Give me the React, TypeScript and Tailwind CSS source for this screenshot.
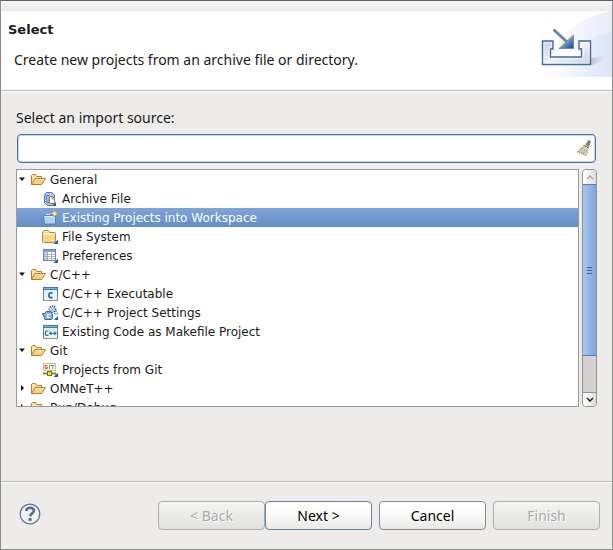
import React, { useState } from 'react';
import { clsx } from 'clsx';

// ===============================================
// TYPES
// ===============================================

type IconName =
  | 'folder'
  | 'archive'
  | 'project'
  | 'fileSystem'
  | 'preferences'
  | 'cExecutable'
  | 'cSettings'
  | 'makefile'
  | 'git';

interface SourceItem {
  label: string;
  icon: IconName;
}

interface SourceGroup {
  label: string;
  open: boolean;
  items: SourceItem[];
}

// ===============================================
// DATA
// ===============================================

const initialGroups: SourceGroup[] = [
  {
    label: 'General',
    open: true,
    items: [
      { label: 'Archive File', icon: 'archive' },
      { label: 'Existing Projects into Workspace', icon: 'project' },
      { label: 'File System', icon: 'fileSystem' },
      { label: 'Preferences', icon: 'preferences' },
    ],
  },
  {
    label: 'C/C++',
    open: true,
    items: [
      { label: 'C/C++ Executable', icon: 'cExecutable' },
      { label: 'C/C++ Project Settings', icon: 'cSettings' },
      { label: 'Existing Code as Makefile Project', icon: 'makefile' },
    ],
  },
  {
    label: 'Git',
    open: true,
    items: [{ label: 'Projects from Git', icon: 'git' }],
  },
  { label: 'OMNeT++', open: false, items: [] },
  { label: 'Run/Debug', open: false, items: [] },
];

// ===============================================
// TREE ICONS
// ===============================================

// Small blue corner that marks an import wizard
const corner = <path d="M16 10.5v4.5h-4.500z" fill="#1d62a8" />;

const codeWindow = (
  <>
    <rect x="1.5" y="1.5" width="14" height="13" fill="#e4f4fb" stroke="#5f88a8" />
    <path d="M1 1h15v3H1z" fill="#3f78b5" />
    <path d="M2 2h13v1H2z" fill="#8ab4de" />
    <path d="M1 14.5h15" stroke="#a59467" />
  </>
);

const iconShapes: Record<IconName, React.ReactNode> = {
  folder: (
    <>
      <path d="M1.5 12.5v-9l1-1h3l1 2h5v3" fill="#fbe3a6" stroke="#b87a34" />
      <path d="M1.5 12.5 5 6.5h10.5l-4 6z" fill="#f9d27c" stroke="#b87a34" strokeLinejoin="round" />
      <path d="M5.6 7.5h8" stroke="#ffefc0" />
    </>
  ),
  archive: (
    <>
      <path d="M4.5 1.5h5l3 2.5v8l-2 2h-1v.5h-4V14L2.500 12V4z" fill="#b4cbea" stroke="#4a74b0" />
      <path d="M2.500 4.500h2M2.500 6.500h2M2.500 8.500h2M2.500 10.500h2" stroke="#7f9dca" />
      <path d="M5 4.5h2v7H5z" fill="#f2f6fc" stroke="#4a74b0" />
      <path d="M7.5 5.5h3l2 2v5h-5z" fill="#fffbea" stroke="#8a8468" />
      <path d="M10 5.5v2.5h2.5" fill="none" stroke="#9c8a5e" />
      <path d="M14 11v4h-4z" fill="#1d62a8" />
    </>
  ),
  project: (
    <>
      <path d="M3.5 6V3.500h5V6z" fill="#dbe8f7" stroke="#7d9fce" />
      <path d="M1.5 5.5h12v8.500H2.5z" fill="#b5d1ef" stroke="#5a80ba" />
      <path d="M2.500 6.5h10" stroke="#dcebfb" />
      <path d="m12.5 0 1.200 2.300L16 3.5l-2.300 1.200L12.5 7l-1.200-2.300L9 3.5l2.300-1.200z" fill="#ffe98a" stroke="#b98e28" strokeWidth=".7" />
      <path d="M12.5 1.5v4M10.5 3.5h4" stroke="#fffbe0" />
    </>
  ),
  fileSystem: (
    <>
      <path d="M.5 12.5v-9l1.500-2h4l1.500 2h5.500l.5 1v8l-1 1H1.500z" fill="#f9d681" stroke="#bb8538" />
      <path d="M1.5 4.5h11M1.5 5.5h11" stroke="#fff1c3" />
      <path d="M2 2.5h4" stroke="#fff3cf" />
      {corner}
    </>
  ),
  preferences: (
    <>
      <rect x="1.5" y="1.5" width="12" height="11" fill="#fff" stroke="#6e83a4" />
      <path d="M2 2h11v2H2z" fill="#8aa3c8" />
      <path d="M2 4h3v8H2z" fill="#c1d1e8" />
      <path d="M2 6.5h11M2 8.5h11M2 10.5h11" stroke="#a9b7cf" />
      <path d="M5.5 2v10M9.5 2v10" stroke="#8fa1bf" strokeWidth=".8" />
      {corner}
    </>
  ),
  cExecutable: (
    <>
      {codeWindow}
      <path d="M10.5 6.8H8.200L7 8v2.500l1.200 1.200h2.300" fill="none" stroke="#286899" strokeWidth="1.8" />
    </>
  ),
  cSettings: (
    <>
      <path d="M.5 8.5H3l1-2h5v1.500l1.500 1v4l-1 1.500H3L2 12z" fill="#86b0e4" stroke="#3566a5" />
      <path d="M8.5 9.5H5.700v3h2.800" fill="none" stroke="#fff" strokeWidth="1.2" />
      <circle cx="10.5" cy="4.2" r="3" fill="#f3f8ff" stroke="#31567e" strokeDasharray="1.2 1" strokeWidth="1.8" />
      <circle cx="14" cy="8" r="1.6" fill="#d8e7f5" stroke="#31567e" strokeDasharray="1 .8" />
      <path d="m8.5 2 4 4.500m0-4.500-4 4.500" stroke="#6482a4" strokeWidth=".7" />
      <path d="M16 11v4h-4z" fill="#1d62a8" />
    </>
  ),
  makefile: (
    <>
      {codeWindow}
      <path
        d="M6.600 7H4.200l-.8.8v2.700l.8.8h2.400M7 9.300h3.600M8.800 7.500v3.600M11 9.300h3.600M12.800 7.500v3.600"
        fill="none"
        stroke="#2b709e"
        strokeWidth="1.2"
      />
    </>
  ),
  git: (
    <>
      <rect x="1.5" y="1.5" width="12" height="7" fill="#fffdf5" stroke="#c5bea2" />
      <path d="M5.5 3.5H3v3h2.300V5.200H4" fill="none" stroke="#d85646" />
      <path d="M7.5 3v4" stroke="#5e9f51" />
      <path d="M9 3.5h3.500m-1.700 0V7" fill="none" stroke="#5e9f51" />
      <path d="M1 11.5h13M7.5 9v2" stroke="#8a8519" strokeWidth="2" />
      <rect x="5.5" y="9.5" width="4" height="4" fill="#efd957" stroke="#827510" />
      {corner}
    </>
  ),
};

function TreeIcon({ name }: { name: IconName }) {
  return (
    <svg viewBox="0 0 16 16" className="h-4 w-4 shrink-0" aria-hidden="true">
      {iconShapes[name]}
    </svg>
  );
}

// ===============================================
// HEADER BANNER
// ===============================================

function ImportBanner() {
  return (
    <svg viewBox="0 0 71 66" className="h-[66px] w-[71px] shrink-0" aria-hidden="true">
      <defs>
        <linearGradient id="sky" x1="0" y1="0" x2="1" y2="0">
          <stop offset="0" stopColor="#fff" />
          <stop offset="1" stopColor="#e6edf9" />
        </linearGradient>
        <linearGradient id="swoosh" x1="0" y1="0" x2="1" y2="0">
          <stop offset="0" stopColor="#d3dff4" stopOpacity="0" />
          <stop offset="1" stopColor="#d3dff4" stopOpacity=".5" />
        </linearGradient>
        <linearGradient id="shade" x1="0" y1="0" x2="1" y2="0">
          <stop offset="0" stopColor="#b9a8b8" />
          <stop offset="1" stopColor="#dfe5f4" stopOpacity="0" />
        </linearGradient>
        <linearGradient id="tray" x1="0" y1="0" x2="1" y2="1">
          <stop offset="0" stopColor="#c3cfe3" />
          <stop offset="0.5" stopColor="#eef2f9" />
          <stop offset="1" stopColor="#c6d2e6" />
        </linearGradient>
        <linearGradient id="arrow" x1="0" y1="0" x2="1" y2="1">
          <stop offset="0.3" stopColor="#bed5ec" />
          <stop offset="0.6" stopColor="#5f88ba" />
          <stop offset="1" stopColor="#17447d" />
        </linearGradient>
        <radialGradient id="glow">
          <stop offset="0" stopColor="#fff0b8" />
          <stop offset="1" stopColor="#fff6d6" stopOpacity="0" />
        </radialGradient>
      </defs>
      <path d="M0 66C8 30 35 6 71 0v66z" fill="url(#sky)" />
      <path d="M18 66C26 43 48 24 71 21v45z" fill="url(#swoosh)" />
      <path d="M50 54V47l18-3c-3 4-9 8-18 10z" fill="url(#shade)" opacity=".7" />
      <path d="M9.500 38h32v8h-32z" fill="#fcfdff" />
      <circle cx="25" cy="31" r="11" fill="url(#glow)" />
      <path
        d="M1.500 30H12v8H9.500v8h31v-8H38v-8h11.500v23.500h-48z"
        fill="url(#tray)"
        stroke="#426b9f"
        strokeWidth="1.4"
      />
      <path d="M3 31.500h7.500V36H8v11.500h34V36h-2.500v-4.500H48V52H3z" fill="none" stroke="#fff" opacity=".5" />
      <path d="m12.500 18.500 13 12" stroke="#6485ad" strokeWidth="2.800" />
      <path d="M32.500 24v13.500H18z" fill="url(#arrow)" stroke="#5b7da8" strokeWidth=".7" />
    </svg>
  );
}

function BroomIcon() {
  return (
    <svg viewBox="0 0 16 18" className="h-[18px] w-4" aria-hidden="true">
      <path d="m10 5.500 2.500-4 2 1-2 5z" fill="#8a827c" stroke="#6b6460" strokeWidth=".8" />
      <path d="M7.500 6.500 12.500 9l-2 7.500L1 13z" fill="#dedac2" stroke="#8b8568" strokeDasharray="1 1" />
      <path
        d="m3 13 6-5m-4 6 6-5m-4 6 4-4M6 8l5 6m-7-4 5 6m-7-4 3 3"
        stroke="#9a946c"
        strokeDasharray="1 1"
      />
      <path d="m8 6 5 3" stroke="#7a746c" />
    </svg>
  );
}

// ===============================================
// SCROLLBAR
// ===============================================

function TreeScrollbar() {
  return (
    <div className="flex w-[15px] shrink-0 flex-col overflow-hidden rounded-[4px] border border-[#929290] bg-[#d4d2d0]">
      <button
        type="button"
        aria-label="Scroll up"
        className="flex h-3.5 shrink-0 items-center justify-center bg-gradient-to-r from-white to-[#dededc]"
      >
        <svg viewBox="0 0 8 5" className="h-[5px] w-2" aria-hidden="true">
          <path d="m1 4 3-3 3 3" fill="none" stroke="#a8a8a6" strokeWidth="1.5" />
        </svg>
      </button>
      <div className="-mx-px flex h-[172px] items-center justify-center border border-[#5380b7] bg-gradient-to-r from-[#a8c6eb] to-[#7fa6da]">
        <div className="flex flex-col gap-0.5">
          <span className="h-px w-[5px] bg-[#3a6194]" />
          <span className="h-px w-[5px] bg-[#3a6194]" />
          <span className="h-px w-[5px] bg-[#3a6194]" />
        </div>
      </div>
      <div className="flex-1" />
      <button
        type="button"
        aria-label="Scroll down"
        className="flex h-3.5 shrink-0 items-center justify-center border-t border-[#929290] bg-gradient-to-r from-white to-[#dededc]"
      >
        <svg viewBox="0 0 8 5" className="h-[5px] w-2" aria-hidden="true">
          <path d="m1 1 3 3 3-3" fill="none" stroke="#222" strokeWidth="1.5" />
        </svg>
      </button>
    </div>
  );
}

// ===============================================
// BUTTONS
// ===============================================

interface WizardButtonProps {
  children: React.ReactNode;
  disabled?: boolean;
  isDefault?: boolean;
}

function WizardButton({ children, disabled = false, isDefault = false }: WizardButtonProps) {
  return (
    <button
      type="button"
      disabled={disabled}
      className={clsx(
        'h-[29px] w-[107px] rounded-[4px] border',
        disabled
          ? 'border-[#adadab] bg-gradient-to-b from-[#f4f4f3] to-[#e2e1df] text-[#a9a8a6] [text-shadow:1px_1px_0_white]'
          : 'bg-gradient-to-b from-white via-[#fafafa] to-[#e9e8e6] text-black',
        !disabled && (isDefault ? 'border-[#6482ac]' : 'border-[#888886]')
      )}
    >
      {children}
    </button>
  );
}

// ===============================================
// MAIN COMPONENT
// ===============================================

export default function App() {
  const [groups, setGroups] = useState(initialGroups);
  const [selected, setSelected] = useState('Existing Projects into Workspace');
  const [filter, setFilter] = useState('');

  const toggleGroup = (label: string) => {
    setGroups((prev) => prev.map((g) => (g.label === label ? { ...g, open: !g.open } : g)));
  };

  return (
    <div className="flex min-h-screen flex-col border border-t-[#625f60] border-r-[#8c8c8b] border-b-[#8c8c8b] border-l-[#8c8c8b] bg-[#edecea] font-['Noto_Sans',sans-serif] text-sm leading-5 text-[#1a1a1a]">
      <div className="h-2.5 bg-gradient-to-b from-[#f6f6f6] to-[#eaeaea]" />

      {/* Header */}
      <header className="flex h-20 items-start justify-between border-b border-[#bab9b7] bg-white">
        <div className="pt-[9px]">
          <h1 className="pl-[7px] font-['DejaVu_Sans',sans-serif] text-[13px] font-bold">Select</h1>
          <p className="pt-2.5 pl-[13px]">Create new projects from an archive file or directory.</p>
        </div>
        <ImportBanner />
      </header>

      {/* Import source */}
      <main className="flex flex-1 flex-col border-t border-white px-[15px] pt-4">
        <label htmlFor="import-source">Select an import source:</label>
        <div className="relative mx-px mt-1.5">
          <input
            id="import-source"
            type="text"
            value={filter}
            onChange={(e) => setFilter(e.target.value)}
            className="block h-[29px] w-full rounded-[4px] border border-[#4b70a4] bg-white pr-8 pl-2 shadow-[inset_0_0_0_1px_#c3d5ee] outline-none"
          />
          <button
            type="button"
            aria-label="Clear"
            onClick={() => setFilter('')}
            className="absolute top-[5px] right-1"
          >
            <BroomIcon />
          </button>
        </div>

        <div className="mt-1.5 flex h-[238px] gap-[3px]">
          <ul
            role="tree"
            aria-label="Import sources"
            className="flex-1 overflow-hidden border border-[#9b9a98] bg-white font-['DejaVu_Sans',sans-serif] text-xs"
          >
            {groups.map((group) => (
              <li key={group.label} role="treeitem" aria-expanded={group.open}>
                <button
                  type="button"
                  onClick={() => toggleGroup(group.label)}
                  className="flex h-[19px] w-full items-center pl-0.5 text-left"
                >
                  <svg viewBox="0 0 7 7" className="mr-1 h-[7px] w-[7px]" aria-hidden="true">
                    <path d={group.open ? 'M0 1.5h6L3 5z' : 'M2 0v6l3-3z'} fill="#111" />
                  </svg>
                  <TreeIcon name="folder" />
                  <span className="pl-1">{group.label}</span>
                </button>
                {group.open && (
                  <ul role="group">
                    {group.items.map((item) => (
                      <li key={item.label} role="treeitem" aria-selected={selected === item.label}>
                        <button
                          type="button"
                          onClick={() => setSelected(item.label)}
                          className={clsx(
                            'flex h-[19px] w-full items-center gap-1 pl-[25px] text-left',
                            selected === item.label &&
                              'bg-gradient-to-b from-[#7fa5d8] to-[#648dc3] text-white'
                          )}
                        >
                          <TreeIcon name={item.icon} />
                          {item.label}
                        </button>
                      </li>
                    ))}
                  </ul>
                )}
              </li>
            ))}
          </ul>
          <TreeScrollbar />
        </div>
      </main>

      {/* Actions */}
      <footer className="border-t border-[#bab9b7]">
        <div className="flex items-start justify-between border-t border-white pt-[18px] pr-3 pb-[19px] pl-[18px]">
          <button type="button" aria-label="Help" className="pt-0.5">
            <svg viewBox="0 0 22 22" className="h-[22px] w-[22px]" aria-hidden="true">
              <circle cx="11" cy="11" r="9.8" fill="#f1f1f1" stroke="#5a7394" strokeWidth="1.3" />
              <path
                d="M7.2 8c.2-2.2 1.8-3.2 3.9-3.2 2.2 0 3.8 1.1 3.8 3 0 2.5-3.7 2.7-3.7 5.4"
                fill="none"
                stroke="#526d92"
                strokeWidth="2.6"
              />
              <circle cx="11.1" cy="16.5" r="1.7" fill="#526d92" />
            </svg>
          </button>
          <div className="flex gap-[7px]">
            <div className="flex">
              <WizardButton disabled>&lt; Back</WizardButton>
              <WizardButton isDefault>Next &gt;</WizardButton>
            </div>
            <WizardButton>Cancel</WizardButton>
            <WizardButton disabled>Finish</WizardButton>
          </div>
        </div>
      </footer>
    </div>
  );
}
